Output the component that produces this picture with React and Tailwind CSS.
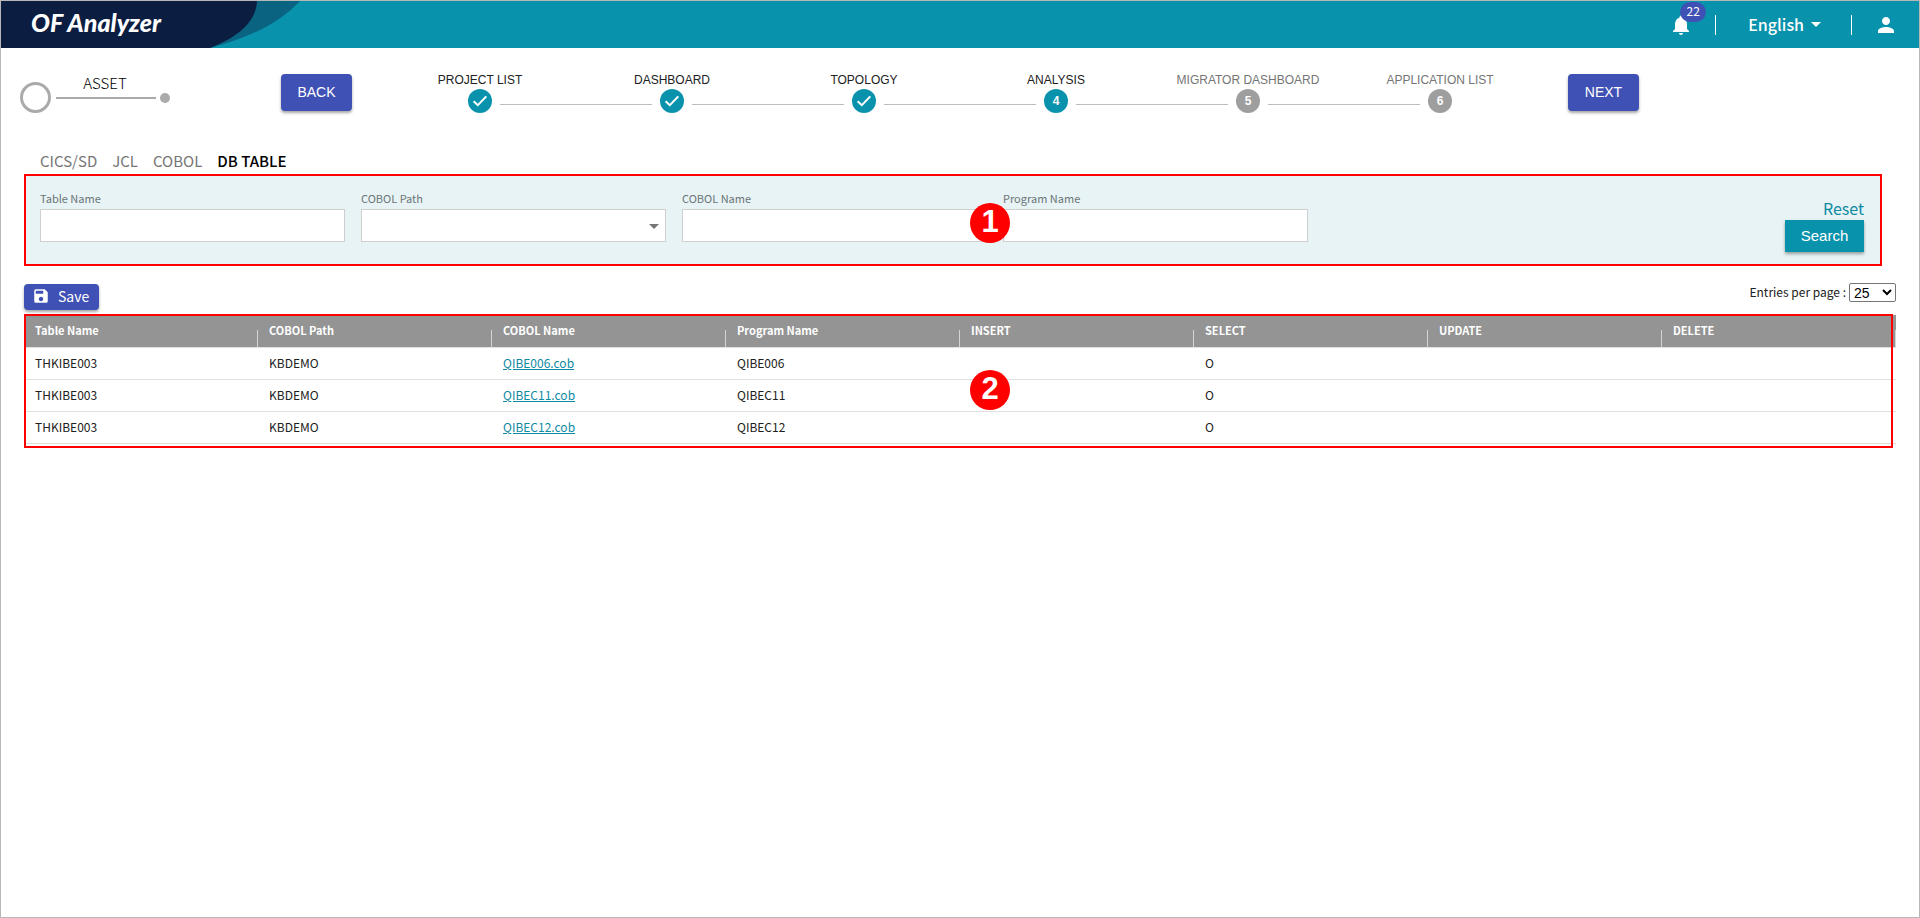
import { useState } from 'react'
import { MdArrowDropDown, MdNotifications, MdPerson, MdSave } from 'react-icons/md'

const STEPS = [
  { label: 'PROJECT LIST', state: 'done' },
  { label: 'DASHBOARD', state: 'done' },
  { label: 'TOPOLOGY', state: 'done' },
  { label: 'ANALYSIS', state: 'active' },
  { label: 'MIGRATOR DASHBOARD', state: 'todo' },
  { label: 'APPLICATION LIST', state: 'todo' },
]

const TABS = ['CICS/SD', 'JCL', 'COBOL', 'DB TABLE']

const COLUMNS = ['Table Name', 'COBOL Path', 'COBOL Name', 'Program Name', 'INSERT', 'SELECT', 'UPDATE', 'DELETE']

const ROWS = [
  { table: 'THKIBE003', path: 'KBDEMO', cobol: 'QIBE006.cob', program: 'QIBE006', select: 'O' },
  { table: 'THKIBE003', path: 'KBDEMO', cobol: 'QIBEC11.cob', program: 'QIBEC11', select: 'O' },
  { table: 'THKIBE003', path: 'KBDEMO', cobol: 'QIBEC12.cob', program: 'QIBEC12', select: 'O' },
]

const Header = () => (
  <header className="relative flex h-[47px] items-center justify-between bg-[#0992ac] text-white">
    <svg className="absolute left-0 top-0" width="300" height="47" viewBox="0 0 300 47" aria-hidden="true">
      <path d="M0 0H299C279 21 253 35 209 47H0Z" fill="#0a6380" />
      <path d="M0 0H256C255 20 239 35 209 47H0Z" fill="#0b1d41" />
    </svg>
    <h1 className="relative pb-1 pl-[30px] font-['Lato',sans-serif] text-[25px] leading-[43px] font-black italic">OF Analyzer</h1>
    <div className="flex items-center pr-[21px]">
      <button className="relative" aria-label="Notifications">
        <MdNotifications className="h-6 w-6" />
        <span className="absolute -top-[11px] left-[11px] flex h-5 w-[26px] items-center justify-center rounded-full bg-[#3f51b5] pb-px text-[12px] leading-5">22</span>
      </button>
      <span className="ml-[22px] h-5 w-px bg-white" />
      <button className="ml-8 flex items-center pb-0.5 text-[16px] leading-6 font-medium">
        English <MdArrowDropDown className="h-6 w-6" />
      </button>
      <span className="ml-[23px] h-5 w-px bg-white" />
      <button className="ml-[22px]" aria-label="Account">
        <MdPerson className="h-6 w-6" />
      </button>
    </div>
  </header>
)

const NavButton = ({ children }) => (
  <button className="h-[37px] w-[71px] rounded bg-[#3f51b5] font-['Liberation_Sans',sans-serif] text-[14px] text-white shadow-[0_2px_3px_rgba(0,0,0,0.35)]">
    {children}
  </button>
)

const StepIcon = ({ state, number }) => (
  <svg className="h-6 w-6 font-['Liberation_Sans',sans-serif]" viewBox="0 0 24 24" aria-hidden="true">
    <circle cx="12" cy="12" r="12" fill={state === 'todo' ? '#9e9e9e' : '#0992ac'} />
    {state === 'done' ? (
      <path d="M5.6 12.2L9.8 16.2L18.3 7.4" fill="none" stroke="#fff" strokeWidth="2" />
    ) : (
      <text x="12" y="16" textAnchor="middle" fill="#fff" fontSize="12" fontWeight="700">{number}</text>
    )}
  </svg>
)

const Stepper = () => (
  <ol className="flex flex-1 pt-0.5">
    {STEPS.map((step, i) => (
      <li key={step.label} className="relative flex flex-1 flex-col items-center">
        <span
          className={`h-[19px] font-['Liberation_Sans',sans-serif] text-[12px] leading-5 whitespace-nowrap ${
            step.state === 'todo' ? 'text-[#757575]' : 'text-[#212121]'
          }`}
        >
          {step.label}
        </span>
        <StepIcon state={step.state} number={i + 1} />
        {/* connector to the next step */}
        {i < STEPS.length - 1 && (
          <span className="absolute top-[34px] left-[calc(50%+20px)] h-px w-[calc(100%-40px)] bg-[#bdbdbd]" />
        )}
      </li>
    ))}
  </ol>
)

const Progress = () => (
  <section className="flex h-[100px] items-start pt-5 pl-[19px]">
    <div className="flex h-[59px] w-[261px] items-center">
      <span className="h-[31px] w-[31px] rounded-full border-[3px] border-[#aaaaaa]" />
      <div className="ml-[5px] w-[100px] text-center">
        <p className="-mt-[25px] mb-0.5 pr-0.5 text-[15px] leading-6 font-light text-black">ASSET</p>
        <div className="h-0.5 bg-[#aaaaaa]" />
      </div>
      <span className="ml-1 h-2.5 w-2.5 rounded-full bg-[#aaaaaa]" />
    </div>
    <div className="flex flex-1 items-start">
      <div className="pt-1.5"><NavButton>BACK</NavButton></div>
      <div className="ml-8 flex flex-1"><Stepper /></div>
      <div className="ml-8 w-[351px] pt-1.5"><NavButton>NEXT</NavButton></div>
    </div>
  </section>
)

const Field = ({ id, label, select }) => (
  <div className="w-[305px]">
    <label htmlFor={id} className="block pb-0.5 text-[11px] leading-[18px] text-[#6b7577]">{label}</label>
    {select ? (
      <div className="relative">
        <select id={id} className="block h-[33px] w-full appearance-none border border-[#cfcfcf] bg-white px-2 text-[13px]" />
        <MdArrowDropDown className="pointer-events-none absolute top-[5px] right-0 h-6 w-6 text-[#757575]" />
      </div>
    ) : (
      <input id={id} type="text" className="block h-[33px] w-full border border-[#cfcfcf] bg-white px-2 text-[13px]" />
    )}
  </div>
)

const Marker = ({ children }) => (
  <span className="flex h-10 w-10 items-center justify-center rounded-full bg-[#ff0000] pb-0.5 font-['Liberation_Sans',sans-serif] text-[31px] leading-9 font-bold text-white">
    {children}
  </span>
)

const SearchPanel = () => (
  <section className="relative mr-[14px] flex h-[92px] justify-between border-2 border-[#ff0000] bg-[#e7f3f5] pt-[13px] pr-4 pl-[14px]">
    <div className="flex gap-4">
      <Field id="tableName" label="Table Name" />
      <Field id="cobolPath" label="COBOL Path" select />
      <Field id="cobolName" label="COBOL Name" />
      <Field id="programName" label="Program Name" />
    </div>
    <div className="flex flex-col items-end pt-[7px]">
      <button className="text-[16px] leading-6 text-[#0e8aa3]">Reset</button>
      <button className="h-8 w-[79px] bg-[#0992ac] font-['Liberation_Sans',sans-serif] text-[15px] text-white shadow-[0_2px_3px_rgba(0,0,0,0.35)]">
        Search
      </button>
    </div>
    <div className="absolute top-[27px] left-[944px]"><Marker>1</Marker></div>
  </section>
)

const ResultTable = () => (
  <section className="relative">
    <table className="w-full table-fixed border-collapse text-left text-[12px] text-[#212121]">
      <thead>
        <tr className="h-8 border-b border-[#e0e0e0] bg-[#949494]">
          {COLUMNS.map(c => (
            <th key={c} className="relative pb-0.5 pl-[11px] text-[11px] leading-5 font-bold text-white">
              {c}
              <span className="absolute right-0 bottom-0 h-[17px] w-px bg-[#d5d5d5]" />
            </th>
          ))}
        </tr>
      </thead>
      <tbody>
        {ROWS.map(r => (
          <tr key={r.cobol} className="h-8 border-b border-[#e0e0e0]">
            <td className="pl-[11px]">{r.table}</td>
            <td className="pl-[11px]">{r.path}</td>
            <td className="pl-[11px]"><a href="#" className="text-[#0e8aa3] underline">{r.cobol}</a></td>
            <td className="pl-[11px]">{r.program}</td>
            <td />
            <td className="pl-[11px]">{r.select}</td>
            <td />
            <td />
          </tr>
        ))}
      </tbody>
    </table>
    <div className="pointer-events-none absolute -top-px right-[3px] -bottom-1 left-0 border-2 border-[#ff0000]" />
    <div className="absolute top-[55px] left-[946px]"><Marker>2</Marker></div>
  </section>
)

export default function App() {
  const [activeTab, setActiveTab] = useState('DB TABLE')
  const [perPage, setPerPage] = useState('25')

  return (
    <div className="min-h-screen border border-[#b8b8b8] bg-white font-['Noto_Sans_CJK_KR',sans-serif]">
      <Header />
      <Progress />
      <main className="pr-[23px] pl-[23px]">
        <nav className="flex h-[26px] gap-[15px] pl-4 text-[15px] leading-[26px]">
          {TABS.map(tab => (
            <button
              key={tab}
              onClick={() => setActiveTab(tab)}
              className={tab === activeTab ? 'font-medium text-black' : 'text-[#757575]'}
            >
              {tab}
            </button>
          ))}
        </nav>
        <SearchPanel />
        <div className="flex h-[49px] justify-between pt-4">
          <button className="mt-0.5 flex h-[26px] w-[75px] items-center gap-2 rounded bg-[#3f51b5] pb-0.5 pl-2 text-[14px] leading-6 text-white shadow-[0_2px_3px_rgba(0,0,0,0.35)]">
            <MdSave className="h-[18px] w-[18px]" /> Save
          </button>
          <div className="flex h-5 items-center gap-[3px]">
            <label htmlFor="perPage" className="text-[12px] leading-5 text-[#212121]">Entries per page :</label>
            <select
              id="perPage"
              value={perPage}
              onChange={e => setPerPage(e.target.value)}
              className="h-[19px] w-[47px] rounded-xs border border-[#767676] bg-white font-['Liberation_Sans',sans-serif] text-[14px] leading-4 text-black"
            >
              <option>25</option>
              <option>50</option>
              <option>100</option>
            </select>
          </div>
        </div>
        <ResultTable />
      </main>
    </div>
  )
}
